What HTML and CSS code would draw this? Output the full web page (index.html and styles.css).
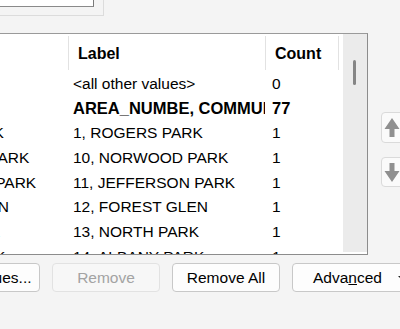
FILE: index.html
```html
<!DOCTYPE html>
<html>
<head>
<meta charset="utf-8">
<link rel="stylesheet" href="styles.css">
</head>
<body>
<div class="page">
  <div class="top">
    <div class="frame"><div class="textbox"></div></div>
  </div>
  <div class="middle">
    <div class="list">
      <div class="table">
        <div class="row head">
          <div class="cell c-value"></div>
          <div class="cell c-label">Label</div>
          <div class="cell c-count">Count</div>
          <div class="cell c-fill"></div>
        </div>
        <div class="row"><div class="cell c-value">&lt;all other values&gt;</div><div class="cell c-label">&lt;all other values&gt;</div><div class="cell c-count">0</div><div class="cell c-fill"></div></div>
        <div class="row bold"><div class="cell c-value">&lt;Heading&gt;</div><div class="cell c-label">AREA_NUMBE, COMMUNITY</div><div class="cell c-count">77</div><div class="cell c-fill"></div></div>
        <div class="row"><div class="cell c-value">1, ROGERS PARK</div><div class="cell c-label">1, ROGERS PARK</div><div class="cell c-count">1</div><div class="cell c-fill"></div></div>
        <div class="row"><div class="cell c-value">10, NORWOOD PARK</div><div class="cell c-label">10, NORWOOD PARK</div><div class="cell c-count">1</div><div class="cell c-fill"></div></div>
        <div class="row"><div class="cell c-value">11, JEFFERSON PARK</div><div class="cell c-label">11, JEFFERSON PARK</div><div class="cell c-count">1</div><div class="cell c-fill"></div></div>
        <div class="row"><div class="cell c-value">12, FOREST GLEN</div><div class="cell c-label">12, FOREST GLEN</div><div class="cell c-count">1</div><div class="cell c-fill"></div></div>
        <div class="row"><div class="cell c-value">13, NORTH PARK</div><div class="cell c-label">13, NORTH PARK</div><div class="cell c-count">1</div><div class="cell c-fill"></div></div>
        <div class="row"><div class="cell c-value">14, ALBANY PARK</div><div class="cell c-label">14, ALBANY PARK</div><div class="cell c-count">1</div><div class="cell c-fill"></div></div>
        <div class="row"><div class="cell c-value">15, PORTAGE PARK</div><div class="cell c-label">15, PORTAGE PARK</div><div class="cell c-count">1</div><div class="cell c-fill"></div></div>
      </div>
      <div class="vscroll"><div class="thumb"></div></div>
    </div>
    <div class="side">
      <button class="arrow up" aria-label="Move up">
        <svg width="28" height="29" viewBox="0 0 28 29"><polygon points="10,5 17.5,16 12.5,16 12.5,24 7.5,24 7.5,16 2.5,16" fill="#8f8f8f"/></svg>
      </button>
      <button class="arrow down" aria-label="Move down">
        <svg width="28" height="28" viewBox="0 0 28 28"><polygon points="7.5,5 12.5,5 12.5,13 17.5,13 10,24 2.5,13 7.5,13" fill="#8f8f8f"/></svg>
      </button>
    </div>
  </div>
  <div class="buttons">
    <button class="btn">Add Values...</button>
    <button class="btn disabled">Remove</button>
    <button class="btn">Remove All</button>
    <button class="btn adv">Adva<u>n</u>ced<svg class="caret" width="8" height="6" viewBox="0 0 8 6"><polygon points="0,1 8,1 4,5" fill="#222"/></svg></button>
  </div>
</div>
</body>
</html>
```

FILE: styles.css
```css
html, body {
  margin: 0;
  padding: 0;
}
body {
  background: #f4f4f4;
  font-family: "Liberation Sans", Arial, sans-serif;
  font-size: 15.5px;
  color: #000;
  overflow: hidden;
}
.page {
  width: 400px;
  height: 329px;
  overflow: hidden;
}
.top {
  height: 33px;
}
.frame {
  margin-left: -60px;
  width: 164px;
  height: 16px;
  box-sizing: border-box;
  border-right: 1px solid #dcdcdc;
  border-bottom: 1px solid #dcdcdc;
}
.textbox {
  width: 154px;
  height: 7px;
  box-sizing: border-box;
  background: #fff;
  border-right: 1px solid #7a7a7a;
  border-bottom: 1px solid #8a8a8a;
}
.middle {
  display: flex;
  align-items: flex-start;
}
.list {
  flex: none;
  margin-left: -133px;
  display: flex;
  height: 222px;
  box-sizing: border-box;
  border: 1px solid #8c8c8c;
  border-top-color: #9a9a9a;
  background: #fff;
  overflow: hidden;
}
.table {
  flex: none;
  width: 475px;
  overflow: hidden;
}
.row {
  display: flex;
  height: 24.7px;
  padding-top: 3px;
  box-sizing: border-box;
  line-height: 21.7px;
  white-space: nowrap;
}
.row.bold {
  font-weight: bold;
  font-size: 16.5px;
}
.cell {
  flex: none;
  overflow: hidden;
  box-sizing: border-box;
  border-left: 1px solid transparent;
}
.c-value {
  width: 200px;
  padding-left: 6px;
  border-left: none;
}
.c-label {
  width: 197px;
  padding-left: 4px;
}
.c-count {
  width: 73px;
  padding-left: 6px;
}
.c-fill {
  width: 5px;
}
.row.head {
  height: 36px;
  padding-top: 2px;
  line-height: 36px;
  font-weight: bold;
  font-size: 16px;
}
.head .cell {
  height: 34px;
}
.head .c-label,
.head .c-count,
.head .c-fill {
  border-left-color: #e2e2e2;
  padding-left: 9px;
}
.head .c-fill {
  padding-left: 0;
}
.vscroll {
  flex: none;
  width: 24px;
  height: 218px;
  background: #ebebeb;
}
.thumb {
  margin-top: 26px;
  margin-left: 10px;
  width: 3px;
  height: 25px;
  border-radius: 2px;
  background: #858585;
}
.side {
  flex: none;
  margin-left: 13px;
  padding-top: 79px;
  display: flex;
  flex-direction: column;
  gap: 14px;
}
.arrow {
  display: block;
  width: 30px;
  height: 31px;
  padding: 0;
  box-sizing: border-box;
  border: 1px solid #dadada;
  border-radius: 4px;
  background: #fafafa;
}
.arrow.down {
  height: 30px;
}
.arrow svg {
  display: block;
}
.buttons {
  display: flex;
  gap: 12px;
  margin-left: -68px;
  margin-top: 8px;
}
.btn {
  flex: none;
  width: 108px;
  height: 29px;
  box-sizing: border-box;
  border: 1px solid #c8c8c8;
  border-radius: 4px;
  background: #fdfdfd;
  font-family: inherit;
  font-size: 15.5px;
  color: #000;
  padding: 0;
  white-space: nowrap;
}
.btn.disabled {
  color: #a3a3a3;
  border-color: #e2e2e2;
  background: #f7f7f7;
}
.btn.adv {
  width: 120px;
  display: flex;
  align-items: center;
  padding-left: 20px;
}
.btn.adv u {
  text-decoration-thickness: 1px;
}
.caret {
  margin-left: 16px;
}
```
